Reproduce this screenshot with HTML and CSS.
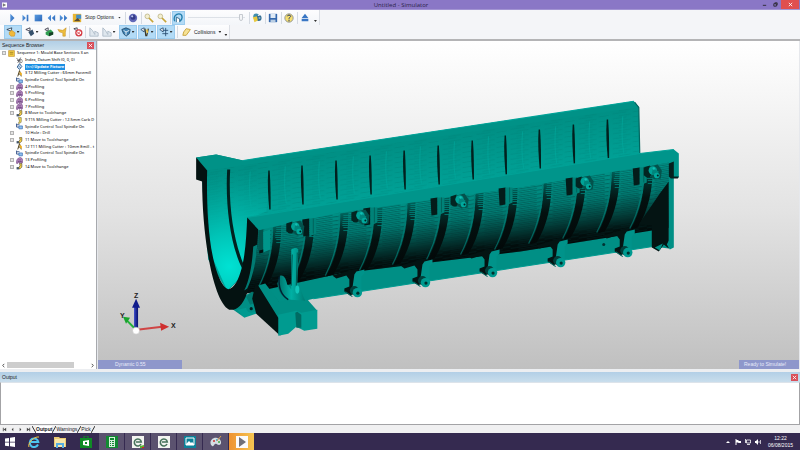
FILE: index.html
```html
<!DOCTYPE html>
<html lang="en">
<head>
<meta charset="utf-8">
<title>Untitled - Simulator</title>
<link rel="stylesheet" href="styles.css">
</head>
<body>
<svg class="defs" aria-hidden="true">
  <defs>
    <linearGradient id="blue" x1="0" y1="0" x2="1" y2="1"><stop offset="0" stop-color="#5a9be0"/><stop offset="1" stop-color="#2a66b8"/></linearGradient>
    <symbol id="i-tool" viewBox="0 0 12 12"><path d="M1 3 7 1 6 5z" fill="#fff" stroke="#26384c"/><path d="M4 6 7 4 11 7 10 11H6L4 9z" fill="#f0b93a" stroke="#c98a1c" stroke-width=".6"/></symbol>
    <symbol id="i-profile" viewBox="0 0 12 12"><path d="M1 11C0 6 3 1 7 1c4 0 5 4 4 9l-2 1-1-3-2 3-2-3-1 3z" fill="#b58ac0" stroke="#6d3d80"/><path d="M4 5h5M3 8h7" stroke="#4d2a60"/></symbol>
    <symbol id="i-spindle" viewBox="0 0 12 12"><path d="M1 1v6h5M1 3h5" fill="none" stroke="#1c3d7a" stroke-width="1.4"/><path d="M5 5h6v5H5z" fill="#8fc0ee" stroke="#205ca8"/></symbol>
    <symbol id="i-cutter" viewBox="0 0 12 12"><path d="M6 1 3 11M6 1l3 10M4 7h4" fill="none" stroke="#4a3a12" stroke-width="1.6"/><path d="m6 3 4 2v5L7 8z" fill="#efb022"/></symbol>
    <symbol id="i-move" viewBox="0 0 12 12"><path d="M1 7h4v4H1z" fill="#43566c"/><path d="M6 1h4v6L7 10H5V7l2-2z" fill="#f5cf45" stroke="#49412a"/></symbol>
    <symbol id="i-index" viewBox="0 0 12 12"><path d="m1 2 8 8M8 1 3 10M2 6l7-1" stroke="#44444c" stroke-width="1.3" fill="none"/><circle cx="8" cy="7" r="3" fill="none" stroke="#666"/></symbol>
    <symbol id="i-fix" viewBox="0 0 12 12"><path d="M6 1 10 6 6 11 2 7z" fill="#cfe3f5" stroke="#24548c" stroke-width="1.5"/><path d="m4 5 4 3" stroke="#24548c"/></symbol>
    <symbol id="i-ring" viewBox="0 0 12 12"><path d="M4 1h5v6c0 3-2 4-5 4l2-4z" fill="#f4dc57" stroke="#6b6330"/></symbol>
    <symbol id="i-dot" viewBox="0 0 12 12"></symbol>
    <symbol id="i-root" viewBox="0 0 12 12"><path d="M1 1h10v10H1z" fill="#f5cf45" stroke="#b9862a"/><path d="M3 4h6M3 7h6" stroke="#7b5b16"/></symbol>
    <symbol id="i-zoom" viewBox="0 0 12 12"><circle cx="4" cy="4" r="2.8" fill="#f4f0d0" stroke="#bdb489"/><path d="m6 6 5 5" stroke="#c7a637" stroke-width="2"/></symbol>
    <symbol id="i-axes" viewBox="0 0 12 12"><path d="M1 3 5 1v5zM5 4h6M8 1v10M4 8h7" fill="#fff" stroke="#24486c"/></symbol>
    <symbol id="i-ghost" viewBox="0 0 12 12"><path d="M1 1v10h10V7L7 5v4L4 4z" fill="#dfe7ee" stroke="#a9b8c5"/></symbol>
  </defs>
</svg>

<header class="titlebar">
  <svg class="app-icon" viewBox="0 0 6 6"><path d="M0 0h6v6H0z" fill="#fff"/><path d="M1 1 5 3 1 5z" fill="#777"/></svg>
  <h1>Untitled - Simulator</h1>
  <div class="win-buttons">
    <button aria-label="Minimise"><svg viewBox="0 0 6 6"><path d="M1 4h4" stroke="#222"/></svg></button>
    <button aria-label="Restore"><svg viewBox="0 0 6 6"><path d="M1 2h3v3H1zM2 1h3v3" fill="none" stroke="#222"/></svg></button>
    <button class="close" aria-label="Close"><svg viewBox="0 0 6 6"><path d="m1 1 4 4M5 1 1 5" stroke="#fff"/></svg></button>
  </div>
</header>

<div class="toolbars">
  <div class="toolbar first">
    <button aria-label="Play"><svg viewBox="0 0 12 12"><path d="M4 1 9 6 4 11z" fill="url(#blue)"/></svg></button>
    <button aria-label="Step"><svg viewBox="0 0 12 12"><path d="M3 2 7 6 3 10zM8 2h2v8H8z" fill="url(#blue)"/></svg></button>
    <button aria-label="Stop"><svg viewBox="0 0 12 12"><path d="M2 2h9v8H2z" fill="url(#blue)"/></svg></button>
    <button aria-label="Rewind"><svg viewBox="0 0 12 12"><path d="M6 2v8L2 6zM11 2v8L7 6z" fill="url(#blue)"/></svg></button>
    <button aria-label="Fast forward"><svg viewBox="0 0 12 12"><path d="M1 2v8l4-4zM6 2v8l4-4z" fill="url(#blue)"/></svg></button>
    <button aria-label="Stop settings"><svg viewBox="0 0 12 12"><path d="M1 1h10v10H1z" fill="#e9b735"/><path d="M5 2h6v5H5z" fill="#438fc8"/><path d="m2 10 5-4 3 4z" fill="#5a4a32"/></svg></button>
    <button class="wide">Stop Options <i class="arrow"></i></button>
    <span class="sep"></span>
    <button aria-label="View"><svg viewBox="0 0 12 12"><circle cx="6" cy="6" r="5" fill="#6169b8"/><circle cx="6" cy="5" r="3" fill="#343a88"/><circle cx="5" cy="4" r="1.3" fill="#b9c5f0"/></svg></button>
    <span class="sep"></span>
    <button aria-label="Zoom in"><svg><use href="#i-zoom"/></svg></button>
    <button aria-label="Zoom out"><svg><use href="#i-zoom"/></svg></button>
    <span class="sep"></span>
    <button class="on" aria-label="Dynamic"><svg viewBox="0 0 12 12"><path d="M2 10C0 4 4 1 7 1c5 0 5 7 1 9" fill="none" stroke="#237fae" stroke-width="1.6"/><path d="M4 11V5l4 2v4" fill="#fff" stroke="#205a80"/></svg></button>
    <input type="range" min="0" max="100" value="97" aria-label="Speed">
    <span class="sep"></span>
    <button aria-label="Options"><svg viewBox="0 0 12 12"><circle cx="5" cy="4" r="3.5" fill="#3f8fb0"/><circle cx="8" cy="6" r="3.5" fill="#316d92"/><path d="m1 5 5-1 1 5-4 2z" fill="#e8c93e"/><path d="M7 3h2M8 6h2" stroke="#fff"/></svg></button>
    <span class="sep"></span>
    <button aria-label="Save"><svg viewBox="0 0 12 12"><path d="M1 1h10v10H1z" fill="#3568ad"/><path d="M3 1h6v5H3z" fill="#dfeaf5"/><path d="M3 8h6v3H3z" fill="#b9cde2"/></svg></button>
    <span class="sep"></span>
    <button aria-label="Help"><svg viewBox="0 0 12 12"><circle cx="6" cy="6" r="5" fill="#f6df6e" stroke="#868b94"/><path d="M4 4c0-2 4-2 4 0 0 1-2 1-2 3M6 8v2" fill="none" stroke="#2d3d66" stroke-width="1.2"/></svg></button>
    <span class="sep"></span>
    <button aria-label="Up"><svg viewBox="0 0 12 12"><path d="M6 1 10 6H2zM2 7h8v3H2z" fill="#3976c4"/></svg></button>
    <i class="arrow low"></i>
  </div>
  <div class="toolbar second">
    <button class="drop on" aria-label="Tool"><svg><use href="#i-tool"/></svg><i class="arrow"></i></button>
    <button class="drop" aria-label="Holder"><svg viewBox="0 0 12 12"><path d="M1 3 6 1v4z" fill="#fff" stroke="#334"/><path d="m4 6 5-3 2 5-4 3z" fill="#34506c"/></svg><i class="arrow"></i></button>
    <button aria-label="Stock"><svg viewBox="0 0 12 12"><path d="M1 3 5 1v4z" fill="#fff" stroke="#334"/><path d="m2 6 6-3 3 3v3l-5 2-4-2z" fill="#2f9e52"/><path d="m6 7 5-1v3l-5 2z" fill="#163d25"/></svg></button>
    <button aria-label="Fixture"><svg viewBox="0 0 12 12"><path d="m1 3 6 1 4-3-1 6v4H7V7L3 6z" fill="#eebd3d" stroke="#c08c20" stroke-width=".6"/></svg></button>
    <span class="sep"></span>
    <button aria-label="Disable"><svg viewBox="0 0 12 12"><path d="M1 2 5 1v4z" fill="#fff" stroke="#334"/><circle cx="7" cy="7" r="3.6" fill="#fff" stroke="#d63a42" stroke-width="1.5"/><path d="m4 5 6 5M5 9l4-4" stroke="#d63a42"/></svg></button>
    <span class="sep"></span>
    <button aria-label="Compare"><svg><use href="#i-ghost"/></svg></button>
    <button class="drop" aria-label="Section"><svg><use href="#i-ghost"/></svg><i class="arrow"></i></button>
    <button class="drop on" aria-label="Part view"><svg viewBox="0 0 12 12"><path d="m1 3 5-2 5 2-1 5-4 3-3-3z" fill="#3f83b4" stroke="#1d4668"/><path d="m3 4 3 2 4-2M6 6v4" fill="none" stroke="#fff"/></svg><i class="arrow"></i></button>
    <button class="drop on" aria-label="Tool view"><svg viewBox="0 0 12 12"><path d="M1 3 5 1v5z" fill="#fff" stroke="#24486c"/><path d="m6 2 1 9M10 2 8 11" stroke="#3d3926" stroke-width="1.4"/><path d="m8 3 1 4" stroke="#efc23a" stroke-width="2"/></svg><i class="arrow"></i></button>
    <button class="drop on" aria-label="Axis view"><svg><use href="#i-axes"/></svg><i class="arrow"></i></button>
    <span class="sep"></span>
    <button class="wide collide"><svg viewBox="0 0 12 12"><path d="m2 6 3-4 5 1-2 3-3 4-4 0z" fill="#f6e295" stroke="#c39a2c"/></svg> Collisions <i class="arrow"></i></button>
    <i class="arrow low"></i>
  </div>
</div>

<main class="work">
  <aside class="browser">
    <div class="panel-head"><h2>Sequence Browser</h2><button class="x" aria-label="Close sequence browser"><svg viewBox="0 0 6 6"><path d="m1 1 4 4M5 1 1 5" stroke="#fff"/></svg></button></div>
    <ul class="tree">
      <li class="root"><i class="box"></i><svg><use href="#i-root"/></svg>Sequence 1: Mould Base Sections 3 an</li>
      <li><i></i><svg><use href="#i-index"/></svg>Index, Datum Shift (0, 0, 0)</li>
      <li><i></i><svg><use href="#i-fix"/></svg><b>(&lt;&lt;) Update Fixture</b></li>
      <li><i></i><svg><use href="#i-cutter"/></svg>3 T2 Milling Cutter : 63mm Facemill</li>
      <li><i></i><svg><use href="#i-spindle"/></svg>Spindle Control Tool Spindle On</li>
      <li><i class="box"></i><svg><use href="#i-profile"/></svg>4 Profiling</li>
      <li><i class="box"></i><svg><use href="#i-profile"/></svg>5 Profiling</li>
      <li><i class="box"></i><svg><use href="#i-profile"/></svg>6 Profiling</li>
      <li><i class="box"></i><svg><use href="#i-profile"/></svg>7 Profiling</li>
      <li><i class="box"></i><svg><use href="#i-move"/></svg>8 Move to Toolchange</li>
      <li><i></i><svg><use href="#i-ring"/></svg>9 T15 Milling Cutter : 12.5mm Carb D</li>
      <li><i></i><svg><use href="#i-spindle"/></svg>Spindle Control Tool Spindle On</li>
      <li><i class="box"></i><svg><use href="#i-dot"/></svg>10 Hole : Drill</li>
      <li><i class="box"></i><svg><use href="#i-move"/></svg>11 Move to Toolchange</li>
      <li><i></i><svg><use href="#i-cutter"/></svg>12 T11 Milling Cutter : 10mm Emill - t</li>
      <li><i></i><svg><use href="#i-spindle"/></svg>Spindle Control Tool Spindle On</li>
      <li><i class="box"></i><svg><use href="#i-profile"/></svg>13 Profiling</li>
      <li><i class="box"></i><svg><use href="#i-move"/></svg>14 Move to Toolchange</li>
    </ul>
    <div class="hscroll">
      <button aria-label="Scroll left"><svg viewBox="0 0 6 6"><path d="M4 1 2 3l2 2" fill="none" stroke="#333"/></svg></button>
      <span class="track"><span class="thumb"></span></span>
      <button aria-label="Scroll right"><svg viewBox="0 0 6 6"><path d="m2 1 2 2-2 2" fill="none" stroke="#333"/></svg></button>
    </div>
  </aside>

  <section class="viewport">
    <svg class="scene" viewBox="98 41 700 327" role="img" aria-label="Machined mould base">
      <defs>
        <linearGradient id="wall" gradientUnits="userSpaceOnUse" x1="430" y1="140" x2="438" y2="192"><stop offset="0" stop-color="#009085"/><stop offset="1" stop-color="#00a398"/></linearGradient>
        <radialGradient id="bowl" gradientUnits="userSpaceOnUse" cx="229" cy="266" r="95"><stop offset="0" stop-color="#00e2d3"/><stop offset=".35" stop-color="#00c4b7"/><stop offset="1" stop-color="#00a297" stop-opacity="0"/></radialGradient>
        <linearGradient id="body" gradientUnits="userSpaceOnUse" x1="450" y1="195" x2="459" y2="259"><stop offset="0" stop-color="#009287"/><stop offset=".35" stop-color="#007d74"/><stop offset=".65" stop-color="#02423d"/><stop offset=".88" stop-color="#020f0e"/><stop offset="1" stop-color="#020808"/></linearGradient>
        <linearGradient id="ribfill" x1="0" y1="0" x2="0" y2="1"><stop offset="0" stop-color="#00665e"/><stop offset=".25" stop-color="#032e2b"/><stop offset=".5" stop-color="#041110"/><stop offset="1" stop-color="#020808"/></linearGradient>
        <linearGradient id="ribedge" gradientUnits="userSpaceOnUse" x1="0" y1="0" x2="0" y2="66"><stop offset="0" stop-color="#00857c"/><stop offset=".6" stop-color="#00776f"/><stop offset="1" stop-color="#025550"/></linearGradient>
        <linearGradient id="steel" x1="0" y1="0" x2="1" y2="0"><stop offset="0" stop-color="#006c64"/><stop offset=".5" stop-color="#00b0a4"/><stop offset="1" stop-color="#007c73"/></linearGradient>
        <pattern id="cuts" width="34" height="4" patternUnits="userSpaceOnUse" patternTransform="skewY(-8.6)"><path d="M0 1h26M8 3h26" stroke="#022c2a" stroke-width=".6" opacity=".65"/></pattern>
        <pattern id="grain" width="34" height="5" patternUnits="userSpaceOnUse" patternTransform="skewY(-8.6)"><path d="M0 1h14M20 2h10M6 4h12" stroke="#006e66" stroke-width=".5" opacity=".4"/></pattern>
        <g id="rib">
          <path d="M-6 1 2 0C2 24-2 44-13 62l-7 2C-10 45-6 25-6 1z" fill="url(#ribfill)"/>
          <path d="M-3 3h6M-3 5h6M-3 7h6M-4 9h7M-4 11h7M-4 13h6M-3 15h5M-3 18h5" stroke="#00857c" stroke-width=".8"/>
          <path d="M-7 2c0 22-4 42-14 61" fill="none" stroke="url(#ribedge)" stroke-width="1.200"/>
        </g>
        <path id="slit" d="M0 0c-1 13 0 27 1 39h1.400c0-13 0-26-1-39z" fill="#02201e"/>
        <path id="seam" d="M0 0c-1 13-1 25 1 37" fill="none" stroke="#00aca0" stroke-width=".5"/>
        <g id="pocket"><path d="M0 1 7 0v17l-6 1z" fill="#041c1a"/><path d="M7 0h7v15l-7 3z" fill="#008278"/><path d="M11 0v15" stroke="#00645c"/></g>
        <g id="knob"><path d="m-9-4 6-2 0 12-6-2z" fill="#032522"/><path d="m-3-5 8-2 4 6-1 8-6 1-6-4z" fill="#04524c"/><circle cx="-5" cy="3" r="3" fill="#032522"/><circle cx="0" cy="-1" r="4.200" fill="#00a297"/><path d="m0-3 6 3-2 6-5-4z" fill="#00857c"/><circle cx="4" cy="4" r="2.800" fill="#00a99d"/><circle cx="5" cy="4" r="1" fill="#022"/><circle cx="1" cy="-3" r="1.200" fill="#12c0b4"/></g>
        <g id="lug"><path d="m-25-17 25-7 3 3-4 4-2 17-4 3-6-4 0-3 5-2v-7l-3-4-10 3z" fill="#041413"/><path d="m-3-18 2-3 8-2v4l-3 3 0 13-6 2-3-3z" fill="#00938a"/><circle cx="-3" cy="-2" r="4.500" fill="#02403c"/><circle r="4.700" fill="#009a90"/><circle cx=".5" cy=".5" r="1.600" fill="#02302d"/><path d="m-12-1 7 5" stroke="#00665e"/></g>
        <linearGradient id="zed" x1="0" x2="1"><stop offset="0" stop-color="#3848c8"/><stop offset="1" stop-color="#08106c"/></linearGradient>
      </defs>

      <!-- far wall of the trough -->
      <path d="m196 157 20-3 27 6L633 101l5 6 1 47-385 64v30l-15 31-12 12-19-32-7-90z" fill="url(#wall)"/>
      <path d="m206 170 26-4 401-60 5 4v44l-385 64v30l-14 30-12 12-18-38z" fill="url(#grain)"/>
      <path d="m206 170 26-4 42-6-8 51-14 6v32l-14 30-11 11-17-38z" fill="url(#bowl)"/>
      <path d="m196 157 20-3 27 6L633 101l5 6-403 59-28 4z" fill="#009287"/>
      <path d="M243 160 633 101" stroke="#00a398" stroke-width="1"/>
      <path d="m634 102 4 5 1 47" fill="none" stroke="#00665f" stroke-width="1.200"/>
      <g>
        <use href="#seam" x="250" y="171"/><use href="#seam" x="285" y="166"/><use href="#seam" x="319" y="161"/><use href="#seam" x="353" y="156"/><use href="#seam" x="386" y="151"/><use href="#seam" x="420" y="146"/><use href="#seam" x="454" y="141"/><use href="#seam" x="488" y="136"/><use href="#seam" x="522" y="131"/><use href="#seam" x="555" y="126"/><use href="#seam" x="589" y="121"/><use href="#seam" x="622" y="116"/>
        <use href="#slit" x="268" y="170"/><use href="#slit" x="301" y="165"/><use href="#slit" x="335" y="160"/><use href="#slit" x="369" y="155"/><use href="#slit" x="403" y="150"/><use href="#slit" x="437" y="145"/><use href="#slit" x="471" y="140"/><use href="#slit" x="504" y="135"/><use href="#slit" x="538" y="129"/><use href="#slit" x="572" y="124"/><use href="#slit" x="606" y="119"/>
      </g>
      <path d="M227 169h3c-2 35 3 69 13 94l-1 5c-12-24-17-64-15-99z" fill="#02211f"/>

      <!-- lower rail and outer body -->
      <path d="m226 304 24-12 55-15L668 222v26l-16-2-339 52-63 16-7 2z" fill="#008f85"/>
      <path d="m313 298 339-52" stroke="#009b90"/>
      <path d="m257 229 83-18 180-25 150-25v66l-150 24-180 22-83 18-12 2z" fill="url(#body)"/>
      <path d="m257 229 83-18 180-25 150-25v66l-150 24-180 22-83 18-12 2z" fill="url(#cuts)"/>
      <g>
        <use href="#rib" x="279" y="224"/><use href="#rib" x="312" y="218"/><use href="#rib" x="346" y="212"/><use href="#rib" x="380" y="207"/><use href="#rib" x="413" y="201"/><use href="#rib" x="447" y="196"/><use href="#rib" x="481" y="191"/><use href="#rib" x="515" y="186"/><use href="#rib" x="549" y="180"/><use href="#rib" x="583" y="175"/><use href="#rib" x="617" y="169"/><use href="#rib" x="650" y="165"/>
      </g>
      <path d="m659 193 9-12v67l-5-4-5 7-7-4v-22l-13-1z" fill="#041413"/>
      <path d="M668 171h5v76l-4 2-3-5 2-4zM662 243l-3 7-5-3z" fill="#008f85"/>

      <!-- top rail of the near wall -->
      <path d="m247 217 392-64 34-4 5 4v24h-10v-15l-148 25-180 25-83 18z" fill="#00958b"/>
      <path d="m247 217 392-64 34-4" fill="none" stroke="#00a297"/>
      <path d="m668 163 5-2v15h5l-1 2h-7l-2-2z" fill="#04201e"/>
      <use href="#pocket" x="363" y="207"/><use href="#pocket" x="430" y="197"/><use href="#pocket" x="498" y="187"/><use href="#pocket" x="565" y="177"/><use href="#pocket" x="632" y="167"/><use href="#pocket" x="302" y="218"/>
      <use href="#knob" x="295" y="227"/><use href="#knob" x="360" y="216"/><use href="#knob" x="459" y="200"/><use href="#knob" x="584" y="182"/><use href="#knob" x="652" y="171"/>
      <use href="#lug" x="357" y="292"/><use href="#lug" x="425" y="282"/><use href="#lug" x="492" y="272"/><use href="#lug" x="560" y="262"/><use href="#lug" x="627" y="252"/>
      <circle cx="603" cy="244" r="1.500" fill="#033"/>

      <!-- open end face -->
      <path d="m196 157 11 13c-1 42 2 91 15 113 5 8 9 7 14-1 9-16 10-44 11-65l11 12-1 18c-3 17-5 34-10 45-5 14-11 18-18 17-16-8-27-72-27-128l-6-2z" fill="#041211"/>
      <path d="m253 246 4-2c-1 18-5 34-10 44l-3 2c6-12 8-28 9-44z" fill="#007b73"/>
      <path d="m258 230 5-1v21l-5 1z" fill="#02544e"/><path d="m263 231 7-2v20l-7 3z" fill="#00958b"/><path d="m259 250 4-1v3l-4 1z" fill="#011"/>

      <!-- clamp foot -->
      <path d="m237 309 14-3 5 7-12 4z" fill="#009a90"/><circle cx="251" cy="307" r="5" fill="#008f86"/><circle cx="251" cy="308" r="1.600" fill="#022"/><path d="m246 296 6-5 5 10-7 3z" fill="#01786f"/>
      <path d="m255 284 10 2 17 19-2 30-24-22-4-15z" fill="#041312"/>
      <path d="m258 285 7-2 14 18 19-3 4-6 7 9 8 9-9 2-12 1-18 4z" fill="#008e84"/>
      <path d="m278 314 18-4 5 2 16-3v19l-13 2-8-4-8 7-10 2z" fill="#009b90"/>
      <path d="m297 311 4 3v13l-5 0-1-15z" fill="#006b63"/>
      <path d="M291 249c3-2 6-2 7 0l-1 34c4 2 3 8 8 17l-14-1c-6 0-12-3-14-16l3-8c4-1 6 4 7 9l4 5z" fill="url(#steel)"/>
      <path d="M279 276c-1 10 1 18 9 23" fill="none" stroke="#023" stroke-width="1.500"/>
      <path d="m297 252-1 33M292 254l-1 31" stroke="#005a54" fill="none"/><ellipse cx="297" cy="289" rx="2" ry="4" fill="#12c7bb"/>

      <!-- axis triad -->
      <path d="m137 329 25-3" stroke="#cf4545" stroke-width="2"/><path d="m160 322 9 4-8 4z" fill="#cf3030"/>
      <path d="M134 304h4v24h-4z" fill="url(#zed)"/><path d="m132 307 4-9 4 9z" fill="#111c8c"/>
      <path d="m134 327-7-7" stroke="#24b13a" stroke-width="2"/><path d="m123 316 7 1-4 6z" fill="#17a52c"/>
      <circle cx="136" cy="330" r="3.500" fill="#fff" stroke="#bbb" stroke-width=".5"/>
      <g class="axis-names"><text x="171" y="327">X</text><text x="120" y="317">Y</text><text x="134" y="297">Z</text></g>
    </svg>
    <span class="status mode">Dynamic 0.55</span>
    <span class="status ready">Ready to Simulate!</span>
  </section>
</main>

<section class="output">
  <div class="panel-head"><h2>Output</h2><button class="x" aria-label="Close output"><svg viewBox="0 0 6 6"><path d="m1 1 4 4M5 1 1 5" stroke="#fff"/></svg></button></div>
  <div class="log"></div>
  <nav class="tabs">
    <button aria-label="First"><svg viewBox="0 0 6 6"><path d="M1 1h1v4H1zM5 1v4L2 3z" fill="#444"/></svg></button>
    <button aria-label="Previous"><svg viewBox="0 0 6 6"><path d="M4 1v4L2 3z" fill="#444"/></svg></button>
    <button aria-label="Next"><svg viewBox="0 0 6 6"><path d="M2 1v4l2-2z" fill="#444"/></svg></button>
    <button aria-label="Last"><svg viewBox="0 0 6 6"><path d="M1 1v4l3-2zM4 1h1v4H4z" fill="#444"/></svg></button>
    <svg class="slant" viewBox="0 0 4 7"><path d="m0 0 4 7" stroke="#333"/></svg>
    <button class="tab current">Output</button>
    <svg class="slant" viewBox="0 0 4 7"><path d="M4 0 0 7" stroke="#333"/></svg>
    <button class="tab">Warnings</button>
    <svg class="slant" viewBox="0 0 4 7"><path d="M4 0 0 7" stroke="#333"/></svg>
    <button class="tab">Pick</button>
    <svg class="slant" viewBox="0 0 4 7"><path d="M4 0 0 7" stroke="#333"/></svg>
  </nav>
</section>

<footer class="taskbar">
  <button class="start" aria-label="Start"><svg viewBox="0 0 12 12"><path d="m1 2.500 4-.6v3.800H1zM6 1.800 11 1v4.700H6zM1 6.500h4v3.800l-4-.6zM6 6.500h5V11l-5-.7z" fill="#fff"/></svg></button>
  <button aria-label="Internet Explorer"><svg viewBox="0 0 12 12"><path d="M10 8.500A4.300 4.300 0 1 1 10.300 6H3" fill="none" stroke="#4cc3f0" stroke-width="2"/><path d="M1 11C-1 8 6 0 11 1" fill="none" stroke="#f4c640" stroke-width="1"/></svg></button>
  <button aria-label="File Explorer"><svg viewBox="0 0 12 12"><path d="M0 1h5l1 1h6v9H0z" fill="#eccb72"/><path d="M1 3h10v8H1z" fill="#f8e6a8"/><path d="M2 7h8v5H8V9H4v3H2z" fill="#58aee0"/></svg></button>
  <button aria-label="Store"><svg viewBox="0 0 12 12"><path d="M0 2h12v10H0z" fill="#108a26"/><path d="M4 2V0h4v2" fill="none" stroke="#108a26"/><path d="M3 5l6-1v6L3 9z" fill="#fff"/><path d="M5 6h2v2H5z" fill="#108a26"/></svg></button>
  <button class="lit" aria-label="Calculator"><svg viewBox="0 0 12 12"><path d="M0 0h12v12H0z" fill="#128a32"/><path d="M3 1h6v10H3z" fill="#d9f0de"/><path d="M4 2h4v2H4zM4 5h1v1H4zm2 0h2v1H6zM4 7h1v1H4zm2 0h2v1H6zM4 9h1v1H4zm2 0h2v1H6z" fill="#128a32"/></svg></button>
  <button class="lit" aria-label="Edgecam"><svg viewBox="0 0 12 12"><path d="M0 0h12v12H0z" fill="#f3f4f1"/><path d="M9 8a3.500 3.500 0 1 1 .3-2H4" fill="none" stroke="#47725b" stroke-width="1.600"/><path d="m8 10 4-1v3H8z" fill="#58b52f"/><path d="M10 11h2v1h-2z" fill="#d22"/></svg></button>
  <button class="lit" aria-label="Edgecam editor"><svg viewBox="0 0 12 12"><path d="M0 0h12v12H0z" fill="#f3f4f1"/><path d="M9 8a3.500 3.500 0 1 1 .3-2H4" fill="none" stroke="#47725b" stroke-width="1.600"/></svg></button>
  <button class="lit" aria-label="Photos"><svg viewBox="0 0 12 12"><path d="M0 0h12v12H0z" fill="#0c8299"/><path d="M2 2h8v7H2z" fill="none" stroke="#fff"/><path d="m2 8 3-3 2 2 1-1 2 2v1H2z" fill="#fff"/></svg></button>
  <button class="lit" aria-label="Paint"><svg viewBox="0 0 12 12"><path d="M1 9C-1 5 3 1 7 2c5 1 5 7 2 7-2 0-2-2-4-1s-1 4-4 1z" fill="#d5dde2"/><circle cx="4" cy="5" r="1" fill="#c33"/><circle cx="7" cy="4" r="1" fill="#39c"/><circle cx="9" cy="6" r="1" fill="#4a4"/><path d="m7 5 4-5" stroke="#dca44c"/></svg></button>
  <button class="lit current" aria-label="Simulator"><svg viewBox="0 0 12 12"><path d="M0 0h12v12H0z" fill="#fbfbfb"/><path d="m3 1 7 5-7 5z" fill="#707078"/></svg></button>
  <div class="tray">
    <svg viewBox="0 0 6 6"><path d="M1 4h4L3 2z" fill="#fff"/></svg>
    <svg viewBox="0 0 6 6"><path d="M1 0v6" stroke="#fff"/><path d="M1 1h2l1 1h2v2H3.500L3 3.500H1z" fill="#fff"/></svg>
    <svg viewBox="0 0 6 6"><path d="M1.500 1h4v3h-4zM2 5.500h3M.5 0v4" fill="none" stroke="#fff" stroke-width=".8"/></svg>
    <svg viewBox="0 0 6 6"><path d="M0 2h1l2-2v6L1 4H0z" fill="#fff"/><path d="M4 2v2M5.500 1v4" stroke="#fff" stroke-width=".7"/></svg>
    <p class="clock"><time>12:22</time><time>06/08/2015</time></p>
  </div>
</footer>
</body>
</html>
```

FILE: styles.css
```css
* { box-sizing: border-box; }

body {
  margin: 0;
  min-height: 100vh;
  display: flex;
  flex-direction: column;
  background: #f5f6f9;
  color: #1a1a1e;
  font: 5px/7px "Liberation Sans", Arial, sans-serif;
}

button {
  display: flex;
  align-items: center;
  justify-content: center;
  margin: 0;
  padding: 0;
  border: 0;
  background: none;
  color: inherit;
  font: inherit;
}

h1, h2, p, ul { margin: 0; padding: 0; font: inherit; list-style: none; }
.defs { position: absolute; width: 0; height: 0; }

/* Title bar */
.titlebar {
  display: grid;
  grid-template-columns: 1fr auto 1fr;
  align-items: center;
  height: 10px;
  padding-left: 2px;
  background: #8a77c6;
  border-bottom: 1px solid #a294d2;
}
.titlebar h1 { font: 6px/8px "Open Sans", sans-serif; color: #2c2448; }
.app-icon { width: 5px; height: 6px; }
.win-buttons { display: flex; justify-content: flex-end; align-self: stretch; }
.win-buttons button { width: 11px; }
.win-buttons .close { width: 18px; margin-right: 1px; background: #e04f4f; }
.win-buttons svg { width: 5px; height: 5px; }

/* Toolbars */
.toolbars { background: #f4f5f8; border-bottom: 2px solid #b4b4b6; }
.toolbar {
  display: flex;
  align-items: center;
  width: max-content;
  height: 14px;
  background: linear-gradient(#fdfdfe, #f3f5f9);
  border-right: 1px solid #dcdfe5;
}
.first { padding-left: 5px; height: 15px; }
.second { padding-left: 4px; }
.toolbar button { width: 13px; height: 14px; flex: none; }
.toolbar svg { width: 10px; height: 10px; flex: none; }
.toolbar .drop { width: 18px; margin-right: 1px; }
.toolbar .wide { width: auto; gap: 3px; padding: 0 2px; }
.toolbar .collide { margin-left: 3px; gap: 2px; padding: 0; }
.toolbar .on { background: #b3dbf6; border: 1px solid #9acbee; }
.sep { width: 1px; height: 12px; margin: 0 1px; background: #d5dae2; }
.arrow {
  width: 3px;
  height: 2px;
  margin: 0 1px;
  background: #333;
  clip-path: polygon(0 0, 100% 0, 50% 100%);
}
.arrow.low { align-self: flex-end; margin: 3px 2px; }
input[type="range"] {
  appearance: none;
  width: 57px;
  height: 12px;
  margin: 0 3px;
  background: linear-gradient(#dde1e7, #dde1e7) center / 100% 1px no-repeat;
}
input[type="range"]::-webkit-slider-thumb {
  appearance: none;
  width: 4px;
  height: 7px;
  border: 1px solid #c6cad0;
  border-radius: 0 0 2px 2px;
  background: #f4f5f7;
}

/* Work area */
.work { flex: 1; display: flex; min-height: 0; background: #e6e8ec; }
.browser {
  display: flex;
  flex-direction: column;
  width: 97px;
  background: #fff;
  border-right: 1px solid #a7a9ad;
}
.panel-head {
  display: flex;
  align-items: center;
  justify-content: space-between;
  height: 9px;
  padding: 0 2px;
  background: linear-gradient(#b2cfe6, #c9deec);
}
.x { width: 7px; height: 7px; background: #d9505a; }
.x svg { width: 5px; height: 5px; }
.tree {
  display: grid;
  grid-auto-rows: 1fr;
  height: 120px;
  padding-left: 10px;
  font: 4px/6px "Noto Sans", sans-serif;
  color: #000;
}
.tree li { display: flex; align-items: center; white-space: nowrap; min-height: 0; }
.tree .root { margin-left: -8px; }
.tree svg { width: 7px; height: 7px; margin: 0 2px; flex: none; }
.tree i { width: 4px; height: 4px; flex: none; }
.tree .box {
  border: 1px solid #b3b3b3;
  background: #e4e4e4;
}
.tree b { padding: 0 1px; background: #1c8fe3; color: #fff; }
.hscroll { display: flex; align-items: center; height: 8px; margin-top: auto; }
.hscroll button { width: 7px; }
.hscroll svg { width: 5px; height: 5px; }
.track { flex: 1; height: 6px; }
.thumb { display: block; width: 82%; height: 6px; background: #cdcdcd; }

.viewport {
  position: relative;
  flex: 1;
  min-width: 0;
  margin: 0 1px;
  overflow: hidden;
  background: linear-gradient(#fff, #e3e3e3 52%, #c0c0c0);
}
.scene { display: block; width: 100%; height: 100%; }
.axis-names { font: bold 7px "Liberation Sans", sans-serif; fill: #222; }
.status {
  position: absolute;
  bottom: 0;
  height: 9px;
  background: #8e97cb;
  color: #e8ebfa;
  line-height: 9px;
}
.mode { left: 0; width: 84px; padding-left: 17px; }
.ready { right: 0; width: 60px; padding-left: 5px; }

/* Output */
.output { border-top: 3px solid #eceef1; background: #f0f0f1; }
.output .panel-head { height: 10px; }
.log { height: 43px; background: #fff; border: 1px solid #a3a3a6; border-top-color: #dce3ea; }
.tabs { display: flex; align-items: center; height: 8px; }
.tabs button { width: 8px; height: 8px; }
.tabs svg { width: 5px; height: 5px; }
.tabs .tab { width: auto; height: 7px; }
.tabs .current { background: #fff; font-weight: bold; }
.tabs .slant { width: 4px; height: 7px; }

/* Task bar */
.taskbar {
  display: flex;
  gap: 1px;
  height: 17px;
  background: #352a50;
}
.taskbar button { width: 25px; }
.taskbar button svg { width: 12px; height: 12px; }
.taskbar .start { width: 20px; }
.taskbar .lit { background: #5b526f; }
.taskbar .current { background: linear-gradient(90deg, #ee9230, #f6c552); }
.tray { display: flex; align-items: center; gap: 4px; margin-left: auto; padding-right: 7px; }
.tray svg { width: 6px; height: 6px; }
.clock { display: flex; flex-direction: column; align-items: center; margin-left: 3px; color: #fff; }
```
